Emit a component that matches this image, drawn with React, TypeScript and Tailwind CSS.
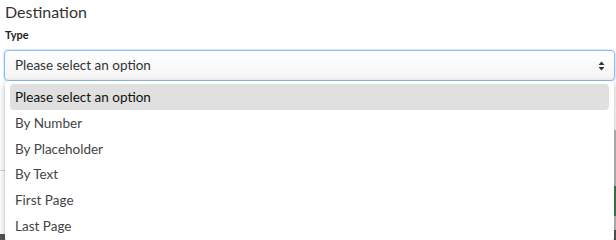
import React from "react";

const options = [
  "Please select an option",
  "By Number",
  "By Placeholder",
  "By Text",
  "First Page",
  "Last Page",
];

const App = () => {
  return (
    <div className="relative h-[240px] w-[616px] overflow-hidden bg-white font-['Lato','Noto_Sans',sans-serif] text-[#212529]">
      {/* page behind the dropdown */}
      <div className="absolute left-0 top-[170px] h-px w-[8px] bg-[#d0d0d0]" />
      <div className="absolute bottom-0 left-0 h-[6px] w-[8px] bg-[#555]" />
      <div className="absolute right-0 top-[130px] h-[110px] w-[2px] bg-[#bdbdbd]" />
      <div className="absolute right-0 top-[186px] h-[30px] w-[2px] bg-[#3a7d4a]" />
      <div className="absolute bottom-0 right-0 h-[10px] w-[3px] bg-[#555]" />

      <div className="px-[5px] pt-[1px]">
        <h2 className="text-[16px] leading-[22px] text-[#333]">Destination</h2>
        <label className="mt-[5px] block text-[11px] font-bold leading-[14px] text-[#222]">Type</label>
      </div>

      {/* select */}
      <div className="ml-[4px] mt-[8px] flex h-[31px] w-[611px] items-center justify-between rounded-[4px] border border-[#8dbdf5] bg-gradient-to-b from-white to-[#f4f4f4] pl-[10px] pr-[8px] shadow-[0_0_0_1px_rgba(150,195,250,0.35)]">
        <span className="text-[13.5px] text-[#333]">Please select an option</span>
        <svg width="7" height="10" viewBox="0 0 7 10" className="mr-[1px]">
          <path d="M3.5 0.5 L6.5 4 H0.5 Z" fill="#333" />
          <path d="M3.5 9.5 L6.5 6 H0.5 Z" fill="#333" />
        </svg>
      </div>

      {/* dropdown list */}
      <div className="absolute left-[5px] top-[81px] w-[609px] rounded-[4px] bg-white px-[5px] pt-[3px] pb-[4px] shadow-[0_2px_6px_rgba(0,0,0,0.3)]">
        {options.map((o, i) => (
          <div
            key={o}
            className={
              i === 0
                ? "flex h-[26px] items-center rounded-[4px] bg-[#e0e0e0] pl-[5px] pt-px text-[13.5px] text-[#111]"
                : "flex h-[25.6px] items-center pl-[5px] pt-px text-[13.5px] text-[#444]"
            }
          >
            {o}
          </div>
        ))}
      </div>
    </div>
  );
};

export default App;
